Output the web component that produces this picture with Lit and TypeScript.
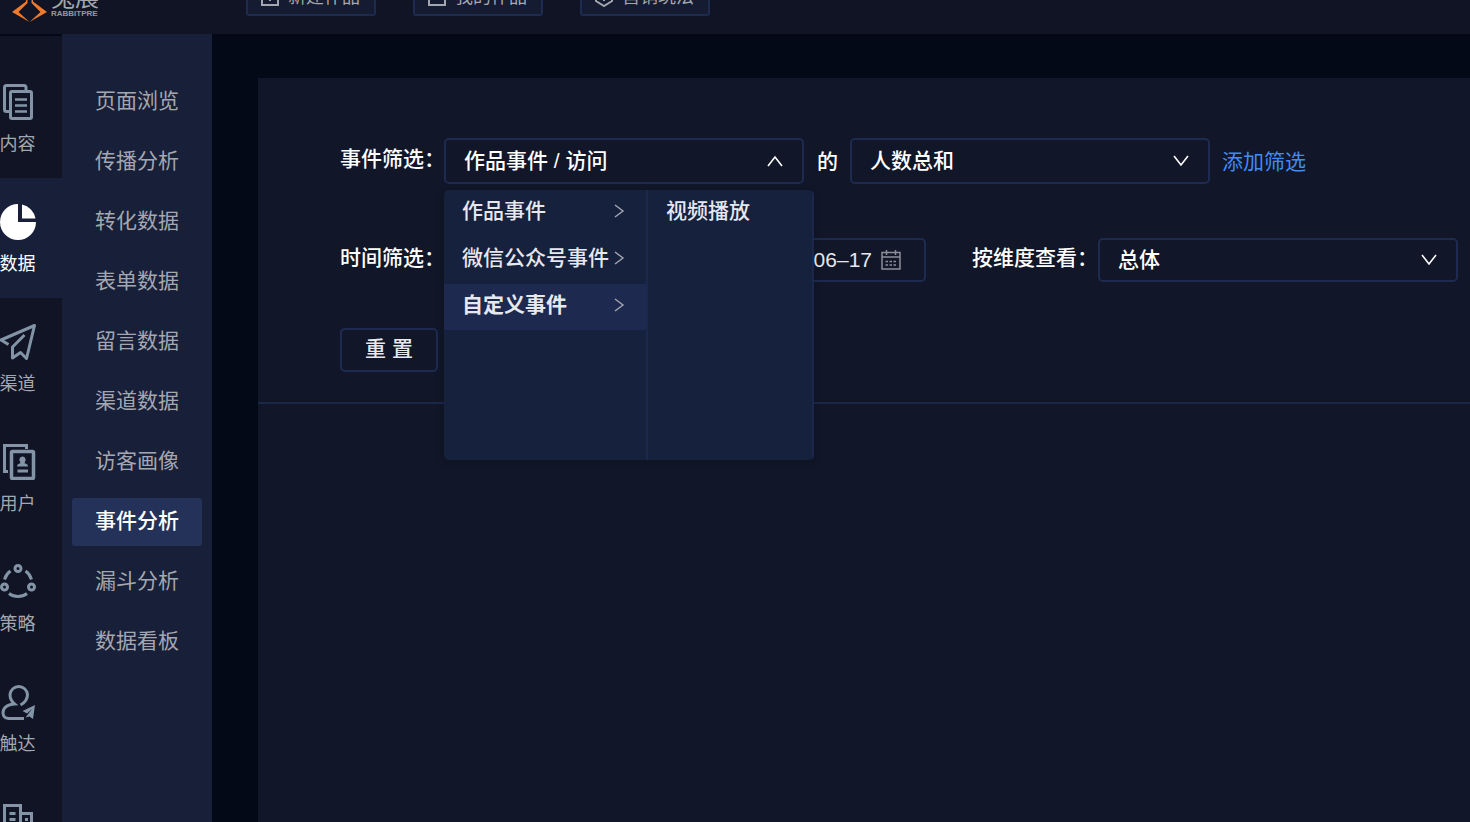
import { LitElement, html, css, svg } from "lit";
import { customElement, state } from "lit/decorators.js";
import { classMap } from "lit/directives/class-map.js";

const railIcons = {
  content: svg`<g fill="none" stroke="currentColor" stroke-width="3"><path d="M10 27.500H6.500a2 2 0 0 1-2-2V3.500a2 2 0 0 1 2-2H24a2 2 0 0 1 2 2V7"/><rect x="10.500" y="7.500" width="21" height="27" rx="1.500"/><path stroke-width="2.500" d="M15 15.500h12M15 21.500h12M15 27.500h12"/></g>`,
  data: svg`<path fill="currentColor" d="M18 0A18 18 0 1 0 36 18H18ZM22 .5A17 17 0 0 1 35.500 14.500H22Z"/>`,
  channel: svg`<path fill="none" stroke="currentColor" stroke-width="3" stroke-linejoin="round" d="M8.500 20.500 1 16 34.500 1.500 26.500 34.500 20.500 28.500 12.500 34V23L24.500 11"/>`,
  user: svg`<g fill="none" stroke="currentColor" stroke-width="3"><path d="M8 27.500H4.500v-26H26.500V5"/><rect x="11.500" y="7.500" width="22" height="27" stroke-width="3.500" rx="1"/></g><path fill="currentColor" d="M22.500 12.500a3.200 3.200 0 0 1 2.400 5.300l-.2 1.700h.8a3 3 0 0 1 2.500 3H17a3 3 0 0 1 2.500-3h.8l-.2-1.700a3.200 3.200 0 0 1 2.400-5.300ZM17.500 25.500h10.500v3H17.500Z"/>`,
  strategy: svg`<g fill="none" stroke="currentColor" stroke-width="3"><circle cx="18" cy="4.500" r="3"/><circle cx="4.500" cy="23" r="3"/><circle cx="31.500" cy="23" r="3"/><path d="M4.500 15.500C5.500 12 7.500 9 10.500 7M31.500 15.500C30.500 12 28.500 9 25.500 7M9 29.500C14 33.500 22 33.500 27 29.500"/></g>`,
  reach: svg`<path fill="none" stroke="currentColor" stroke-width="3" d="M20.500 21C25 18.500 27.500 15 27.500 10.500a8.800 9 0 0 0-17.500 0c0 4 1.500 7 4.500 9.500-8 .5-11.500 4.500-11.500 9 0 3.500 2.500 5.500 6 5.500h15"/><path fill="currentColor" d="M35 21 22.500 27l4.500 2.500L32 25l-6.500 8.500 4-1 3.500 2.500Z"/>`,
  company: svg`<g fill="none" stroke="currentColor" stroke-width="3"><path d="M4.500 36V1.500h16V36M20.500 9.500h11V36M9.500 9.500h6M9.500 15.500h6M25 15.500h3"/></g>`,
};

const chevron = {
  up: svg`<path d="m2 14 7-9 7 9"/>`,
  down: svg`<path d="m2 4 7 9 7-9"/>`,
  right: svg`<path d="m5 3 8 6-8 6"/>`,
};
const arrow = (dir: keyof typeof chevron) =>
  html`<svg class="arrow" viewBox="0 0 18 18" aria-hidden="true">${chevron[dir]}</svg>`;

@customElement("app-root")
export class AppRoot extends LitElement {
  @state() private section = "data";
  @state() private page = "事件分析";
  @state() private open = true;

  private sections: [keyof typeof railIcons, string][] = [
    ["content", "内容"],
    ["data", "数据"],
    ["channel", "渠道"],
    ["user", "用户"],
    ["strategy", "策略"],
    ["reach", "触达"],
    ["company", ""],
  ];
  private pages = ["页面浏览", "传播分析", "转化数据", "表单数据", "留言数据", "渠道数据", "访客画像", "事件分析", "漏斗分析", "数据看板"];

  static styles = css`
    :host {
      display: flex;
      flex-direction: column;
      height: 100vh;
      overflow: hidden;
      background: #030916;
      color: #fff;
      font: 21px/30px "Liberation Sans", "Noto Sans CJK SC", sans-serif;
    }
    * { box-sizing: border-box; }
    a { color: inherit; text-decoration: none; }
    button, select, input { font: inherit; color: inherit; margin: 0; }
    button { cursor: pointer; }
    svg { display: block; flex: none; }

    .header {
      display: flex;
      align-items: flex-end;
      flex: none;
      height: 34px;
      overflow: hidden;
      background: #101424;
    }
    .logo { display: flex; align-items: flex-end; gap: 3px; width: 246px; padding: 0 0 12px 11px; }
    .logo svg { width: 37px; height: 36px; }
    .brand { display: flex; flex-direction: column; padding-bottom: 4px; color: #a4a7b0; }
    .brand-name { font-size: 24px; line-height: 24px; }
    .brand-sub { font: bold 8px/8px "Liberation Sans", sans-serif; color: #9498a2; }
    .actions { display: flex; gap: 37px; padding-bottom: 18px; }
    .action {
      display: flex;
      align-items: center;
      gap: 8px;
      width: 130px;
      height: 44px;
      padding: 6px 0 0 12px;
      border: 2px solid #1e2b50;
      border-radius: 3px;
      background: #151b31;
      color: #a4a7b0;
      font-size: 18px;
      line-height: 26px;
      white-space: nowrap;
    }
    .action svg { width: 20px; height: 20px; fill: none; stroke: currentColor; stroke-width: 2; }

    .body { display: flex; flex: 1; min-height: 0; }
    .rail { flex: none; width: 62px; margin-top: 2px; padding-top: 22px; background: #101424; overflow: hidden; }
    .rail-item {
      display: flex;
      flex-direction: column;
      align-items: center;
      gap: 11px;
      height: 120px;
      padding: 26px 27px 0 0;
      color: #a4a7b0;
      font-size: 18px;
      line-height: 26px;
      white-space: nowrap;
    }
    .rail-item svg { width: 36px; height: 36px; color: #8294a6; }
    .rail-item.active, .rail-item.active svg { color: #fff; }
    .rail-item.active { background: #181f38; }

    .submenu {
      display: flex;
      flex-direction: column;
      gap: 12px;
      flex: none;
      width: 150px;
      padding: 44px 10px;
      background: #181f38;
      color: #a4a7b0;
    }
    .submenu a { padding: 8px 0 10px; border-radius: 3px; text-align: center; }
    .submenu a.active { background: #243259; color: #fff; font-weight: 500; }

    .main { flex: 1; min-width: 0; padding: 44px 0 0 46px; }
    .panel { height: 100%; background: #111628; }
    .filters {
      display: flex;
      flex-direction: column;
      align-items: flex-start;
      padding: 60px 12px 30px 82px;
      border-bottom: 2px solid #1b2748;
    }
    .row { display: flex; align-items: center; width: 100%; }
    .row.event { height: 46px; margin-bottom: 54px; }
    .row.time { height: 44px; margin-bottom: 46px; }
    .label { flex: none; width: 104px; padding-bottom: 4px; font-weight: 500; white-space: nowrap; }
    .label.wide { width: 126px; }
    .of { padding: 2px 12px 0 13px; font-weight: 500; }
    .link { padding: 2px 0 0 12px; color: #3f8cf7; white-space: nowrap; }
    .arrow { width: 18px; height: 18px; fill: none; stroke: currentColor; stroke-width: 1.6; }

    .field { position: relative; display: grid; flex: 0 1 360px; height: 100%; }
    .control {
      grid-area: 1 / 1;
      width: 100%;
      height: 100%;
      padding: 0 18px;
      border: 2px solid #1e2b50;
      border-radius: 5px;
      background: transparent;
      font-weight: 500;
      text-align: left;
      appearance: none;
      outline: none;
    }
    .field > .arrow { grid-area: 1 / 1; place-self: center end; margin-right: 20px; pointer-events: none; }
    .date {
      display: flex;
      align-items: center;
      gap: 9px;
      flex: 0 1 482px;
      height: 100%;
      margin-right: 46px;
      padding-right: 23px;
      border: 2px solid #1e2b50;
      border-radius: 5px;
    }
    .date input {
      flex: 1;
      min-width: 0;
      padding: 0;
      border: 0;
      background: none;
      color: #e6e8ee;
      text-align: right;
      outline: none;
    }
    .date svg { width: 20px; height: 20px; fill: none; stroke: #8c8f99; }
    .reset {
      width: 98px;
      height: 44px;
      padding: 0 0 2px;
      border: 2px solid #1e2b50;
      border-radius: 5px;
      background: transparent;
      color: #e6e8ee;
      font-weight: 500;
    }

    .cascader {
      position: absolute;
      top: 52px;
      left: 0;
      z-index: 2;
      display: flex;
      width: 370px;
      height: 270px;
      border-radius: 5px;
      overflow: hidden;
      background: #16213e;
      color: #e6e8ee;
      box-shadow: 0 2px 8px rgba(0, 0, 0, 0.15);
    }
    .column {
      display: flex;
      flex-direction: column;
      gap: 1px;
      flex: 1;
      margin: 0;
      padding: 0;
      border-right: 2px solid #1b284b;
      list-style: none;
    }
    .column:first-child { flex: 0 0 204px; }
    .option {
      display: flex;
      align-items: center;
      justify-content: space-between;
      height: 46px;
      padding: 0 18px 4px;
      font-weight: 500;
      white-space: nowrap;
    }
    .option .arrow { color: #a4a7b0; stroke-width: 1.4; }
    .option.active { background: #1d294e; font-weight: 700; }
  `;

  render() {
    return html`
      <header class="header">
        <div class="logo">
          <svg viewBox="0 0 37 36" aria-hidden="true">
            <path fill="#ef7a2e" d="M15 10V15.500L1 26 18.500 36 7.500 26 16.500 17V10ZM22 10V15.500L36 26 18.500 36 29.500 26 20.500 17V10Z" />
          </svg>
          <div class="brand">
            <span class="brand-name">兔展</span>
            <span class="brand-sub">RABBITPRE</span>
          </div>
        </div>
        <nav class="actions">
          <button class="action">
            <svg viewBox="0 0 20 20"><path d="M2 2h16v16H2ZM10 5v9M6 9h8" /></svg>新建作品
          </button>
          <button class="action">
            <svg viewBox="0 0 20 20"><path d="M2 2h16v16H2ZM6 7h8M6 12h8" /></svg>我的作品
          </button>
          <button class="action">
            <svg viewBox="0 0 20 20"><path d="m10 1 8 4v9l-8 5-8-5V5ZM6 8l4 2 4-2M10 10v4" /></svg>营销玩法
          </button>
        </nav>
      </header>
      <div class="body">
        <nav class="rail">
          ${this.sections.map(
            ([id, name]) => html`<a
              href="#${id}"
              class=${classMap({ "rail-item": true, active: id === this.section })}
              @click=${() => (this.section = id)}
              ><svg viewBox="0 0 36 36" aria-hidden="true">${railIcons[id]}</svg>${name}</a
            >`
          )}
        </nav>
        <nav class="submenu">
          ${this.pages.map(
            (name) => html`<a href="#${name}" class=${classMap({ active: name === this.page })} @click=${() => (this.page = name)}>${name}</a>`
          )}
        </nav>
        <main class="main">
          <section class="panel">
            <form class="filters" @submit=${(e: Event) => e.preventDefault()}>
              <div class="row event">
                <label class="label" for="event">事件筛选：</label>
                <div class="field">
                  <button id="event" type="button" class="control" aria-expanded=${this.open} @click=${() => (this.open = !this.open)}>
                    作品事件 / 访问
                  </button>
                  ${arrow(this.open ? "up" : "down")} ${this.open ? this.renderCascader() : ""}
                </div>
                <label class="of" for="measure">的</label>
                <div class="field">
                  <select id="measure" class="control"><option>人数总和</option></select>
                  ${arrow("down")}
                </div>
                <a class="link" href="#add">添加筛选</a>
              </div>
              <div class="row time">
                <label class="label" for="date">时间筛选：</label>
                <div class="date">
                  <input id="date" type="text" value="06–17" />
                  <svg viewBox="0 0 20 20" aria-hidden="true">
                    <path stroke-width="1.500" d="M1 2.500h18v16.500H1ZM1 7h18M5.500 0v5M14.500 0v5" />
                    <path stroke-width="1.500" stroke-dasharray="2.500 1.500" d="M4.500 11.500h11M4.500 15h11" />
                  </svg>
                </div>
                <label class="label wide" for="dimension">按维度查看：</label>
                <div class="field">
                  <select id="dimension" class="control"><option>总体</option></select>
                  ${arrow("down")}
                </div>
              </div>
              <button type="reset" class="reset">重 置</button>
            </form>
          </section>
        </main>
      </div>
    `;
  }

  private renderCascader() {
    return html`<div class="cascader">
      <ul class="column">
        <li class="option">作品事件${arrow("right")}</li>
        <li class="option">微信公众号事件${arrow("right")}</li>
        <li class="option active">自定义事件${arrow("right")}</li>
      </ul>
      <ul class="column">
        <li class="option">视频播放</li>
      </ul>
    </div>`;
  }
}
